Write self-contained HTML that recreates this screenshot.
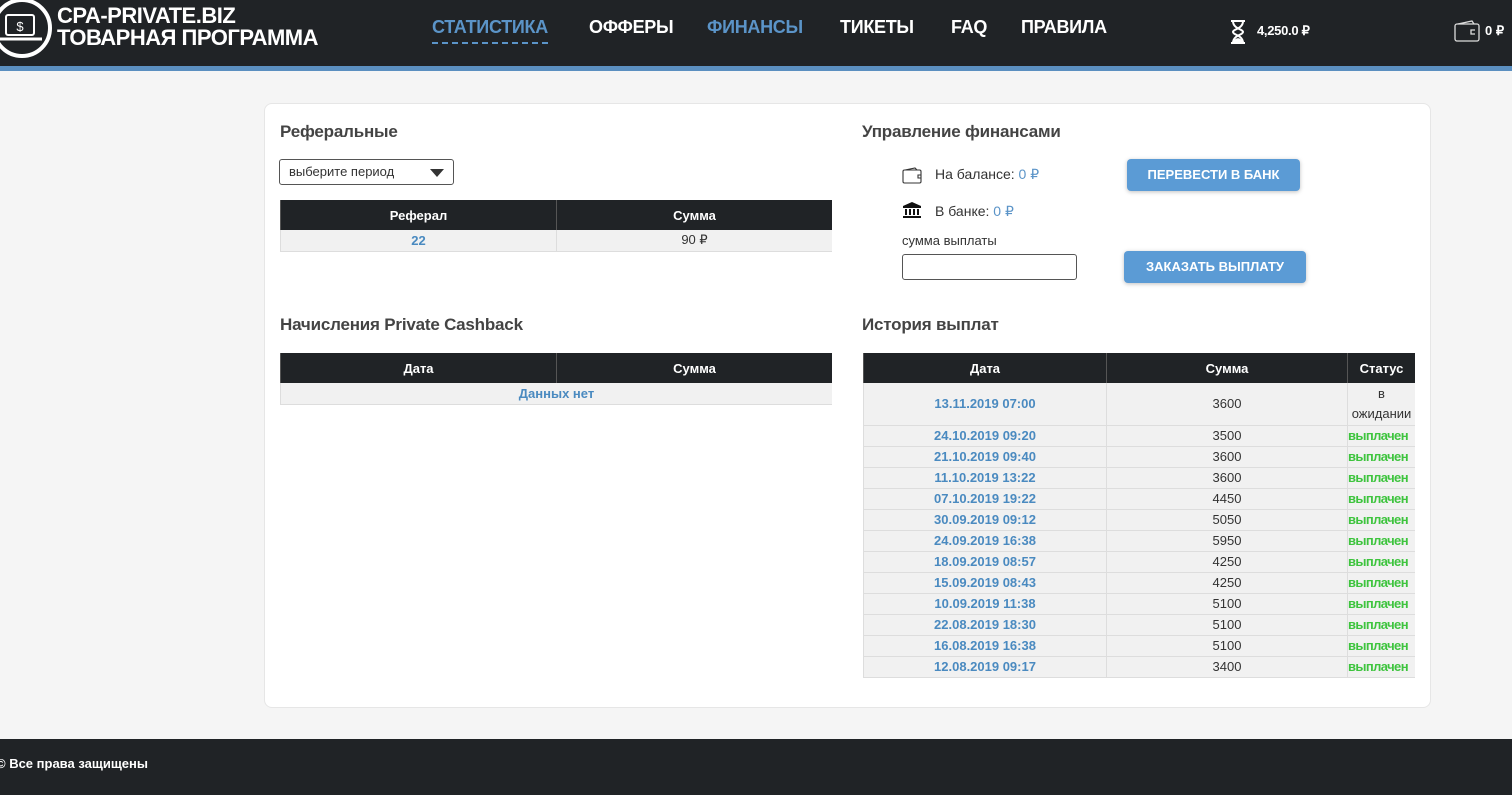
<!DOCTYPE html>
<html><head><meta charset="utf-8">
<style>
*{box-sizing:border-box;margin:0;padding:0}
body{width:1512px;height:795px;overflow:hidden;background:#f5f5f5;font-family:"Liberation Sans",Arial,sans-serif;color:#333;position:relative}
.hdr{position:absolute;left:0;top:0;width:1512px;height:66px;background:#202326}
.bl{position:absolute;left:0;top:66px;width:1512px;height:5px;background:#5b8fc0}
.logo{position:absolute;left:-8px;top:-2px;width:60px;height:60px;border:4px solid #fff;border-radius:50%}
.lt{position:absolute;left:57px;color:#fff;font-weight:bold;font-size:22px;line-height:22px;letter-spacing:-0.5px}
.nav{position:absolute;top:17px;font-size:18px;font-weight:bold;color:#fff;letter-spacing:-0.3px}
.blue{color:#5b94c8}
.card{position:absolute;left:264px;top:103px;width:1167px;height:605px;background:#fff;border-radius:8px;border:1px solid #e6e6e6}
h3{position:absolute;font-size:17px;font-weight:bold;color:#444;letter-spacing:-0.2px}
table{position:absolute;border-collapse:collapse;font-size:13px;text-align:center;table-layout:fixed}
th{background:#202326;color:#fff;font-weight:bold;height:30px;border-left:1px solid #555}
td{background:#f1f1f1;border-bottom:1px solid #ddd;border-left:1px solid #ddd;height:21px;color:#333;overflow:hidden;white-space:nowrap}
td.d{color:#4a8ac0;font-weight:bold}
td.g{color:#3ec43e;font-weight:bold;text-align:left;letter-spacing:-0.6px}
.btn{position:absolute;background:#5b9bd5;color:#fff;font-size:13px;font-weight:bold;text-align:center;border-radius:4px;box-shadow:0 1px 4px rgba(0,0,0,.25)}
.foot{position:absolute;left:0;top:739px;width:1512px;height:56px;background:#202326;color:#fff;font-size:13px;font-weight:bold}
</style></head><body>
<div class="hdr">
<div class="logo"><svg width="52" height="52" viewBox="0 0 52 52" style="position:absolute;left:0;top:0"><rect x="10" y="13" width="28" height="20" rx="2" fill="none" stroke="#fff" stroke-width="2"/><path d="M4 37h42" stroke="#fff" stroke-width="3"/><text x="24" y="29" fill="#fff" font-size="13" text-anchor="middle" font-family="Liberation Sans">$</text></svg></div>
<div class="lt" style="top:5px">CPA-PRIVATE.BIZ</div>
<div class="lt" style="top:27px">ТОВАРНАЯ ПРОГРАММА</div>
<div class="nav blue" style="left:432px;border-bottom:2px dashed #5b94c8;padding-bottom:4px">СТАТИСТИКА</div>
<div class="nav" style="left:589px">ОФФЕРЫ</div>
<div class="nav blue" style="left:707px">ФИНАНСЫ</div>
<div class="nav" style="left:840px">ТИКЕТЫ</div>
<div class="nav" style="left:951px">FAQ</div>
<div class="nav" style="left:1021px">ПРАВИЛА</div>
<svg style="position:absolute;left:1229px;top:19px" width="18" height="26" viewBox="0 0 18 26"><path d="M2 2h14M2 24h14M4 2c0 8 10 8 10 11s-10 3-10 11M14 2c0 8-10 8-10 11s10 3 10 11" fill="none" stroke="#fff" stroke-width="2"/><path d="M4 23c2-5 8-5 10 0z" fill="#fff"/></svg>
<div style="position:absolute;left:1257px;top:23px;color:#fff;font-size:13px;font-weight:bold;letter-spacing:-0.3px">4,250.0 ₽</div>
<svg style="position:absolute;left:1454px;top:19px" width="26" height="24" viewBox="0 0 26 24"><rect x="1" y="5" width="24" height="17" rx="2" fill="none" stroke="#ddd" stroke-width="1.3"/><path d="M4 5l14-3 2 3M21 11h-4v4h4" fill="none" stroke="#ddd" stroke-width="1.3"/></svg>
<div style="position:absolute;left:1485px;top:23px;color:#fff;font-size:13px;font-weight:bold">0 ₽</div>
</div>
<div class="bl"></div>
<div class="card"></div>
<h3 style="left:280px;top:122px">Реферальные</h3>
<div style="position:absolute;left:279px;top:159px;width:175px;height:26px;border:1px solid #555;border-radius:3px;background:#fff;font-size:13px;padding:4px 9px;color:#333">выберите период<span style="position:absolute;right:9px;top:9px;border:7px solid transparent;border-top:8px solid #333;border-bottom:0"></span></div>
<table style="left:280px;top:200px;width:552px"><tr><th style="width:276px">Реферал</th><th>Сумма</th></tr><tr><td class="d">22</td><td>90 ₽</td></tr></table>
<h3 style="left:280px;top:315px">Начисления Private Cashback</h3>
<table style="left:280px;top:353px;width:552px"><tr><th style="width:276px">Дата</th><th>Сумма</th></tr><tr><td class="d" colspan="2">Данных нет</td></tr></table>
<h3 style="left:862px;top:122px">Управление финансами</h3>
<svg style="position:absolute;left:902px;top:166px" width="20" height="18" viewBox="0 0 20 18"><rect x="1" y="4" width="18" height="13" rx="1.5" fill="none" stroke="#333" stroke-width="1.1"/><path d="M3 4l10-2 2 2M19 9h-3v3h3" fill="none" stroke="#333" stroke-width="1.1"/></svg>
<div style="position:absolute;left:935px;top:166px;font-size:14px">На балансе: <span class="blue">0 ₽</span></div>
<svg style="position:absolute;left:902px;top:201px" width="20" height="18" viewBox="0 0 20 18"><path d="M10 1L1 5v2h18V5z M3 8h2v6H3zM7 8h2v6H7zM11 8h2v6h-2zM15 8h2v6h-2zM1 15h18v2H1z" fill="#111"/></svg>
<div style="position:absolute;left:935px;top:203px;font-size:14px">В банке: <span class="blue">0 ₽</span></div>
<div style="position:absolute;left:902px;top:233px;font-size:13px">сумма выплаты</div>
<div style="position:absolute;left:902px;top:254px;width:175px;height:26px;border:1px solid #555;border-radius:3px;background:#fff"></div>
<div class="btn" style="left:1127px;top:159px;width:173px;height:32px;line-height:32px">ПЕРЕВЕСТИ В БАНК</div>
<div class="btn" style="left:1124px;top:251px;width:182px;height:32px;line-height:32px">ЗАКАЗАТЬ ВЫПЛАТУ</div>
<h3 style="left:862px;top:315px">История выплат</h3>
<table style="left:863px;top:353px;width:552px">
<tr><th style="width:243px">Дата</th><th style="width:241px">Сумма</th><th>Статус</th></tr>
<tr><td class="d" style="height:42px">13.11.2019 07:00</td><td>3600</td><td style="line-height:20px;white-space:normal">в<br>ожидании</td></tr>
<tr><td class="d">24.10.2019 09:20</td><td>3500</td><td class="g">выплачен</td></tr>
<tr><td class="d">21.10.2019 09:40</td><td>3600</td><td class="g">выплачен</td></tr>
<tr><td class="d">11.10.2019 13:22</td><td>3600</td><td class="g">выплачен</td></tr>
<tr><td class="d">07.10.2019 19:22</td><td>4450</td><td class="g">выплачен</td></tr>
<tr><td class="d">30.09.2019 09:12</td><td>5050</td><td class="g">выплачен</td></tr>
<tr><td class="d">24.09.2019 16:38</td><td>5950</td><td class="g">выплачен</td></tr>
<tr><td class="d">18.09.2019 08:57</td><td>4250</td><td class="g">выплачен</td></tr>
<tr><td class="d">15.09.2019 08:43</td><td>4250</td><td class="g">выплачен</td></tr>
<tr><td class="d">10.09.2019 11:38</td><td>5100</td><td class="g">выплачен</td></tr>
<tr><td class="d">22.08.2019 18:30</td><td>5100</td><td class="g">выплачен</td></tr>
<tr><td class="d">16.08.2019 16:38</td><td>5100</td><td class="g">выплачен</td></tr>
<tr><td class="d">12.08.2019 09:17</td><td>3400</td><td class="g">выплачен</td></tr>
</table>
<div class="foot"><div style="position:absolute;left:-4px;top:17px">© Все права защищены</div></div>
</body></html>
